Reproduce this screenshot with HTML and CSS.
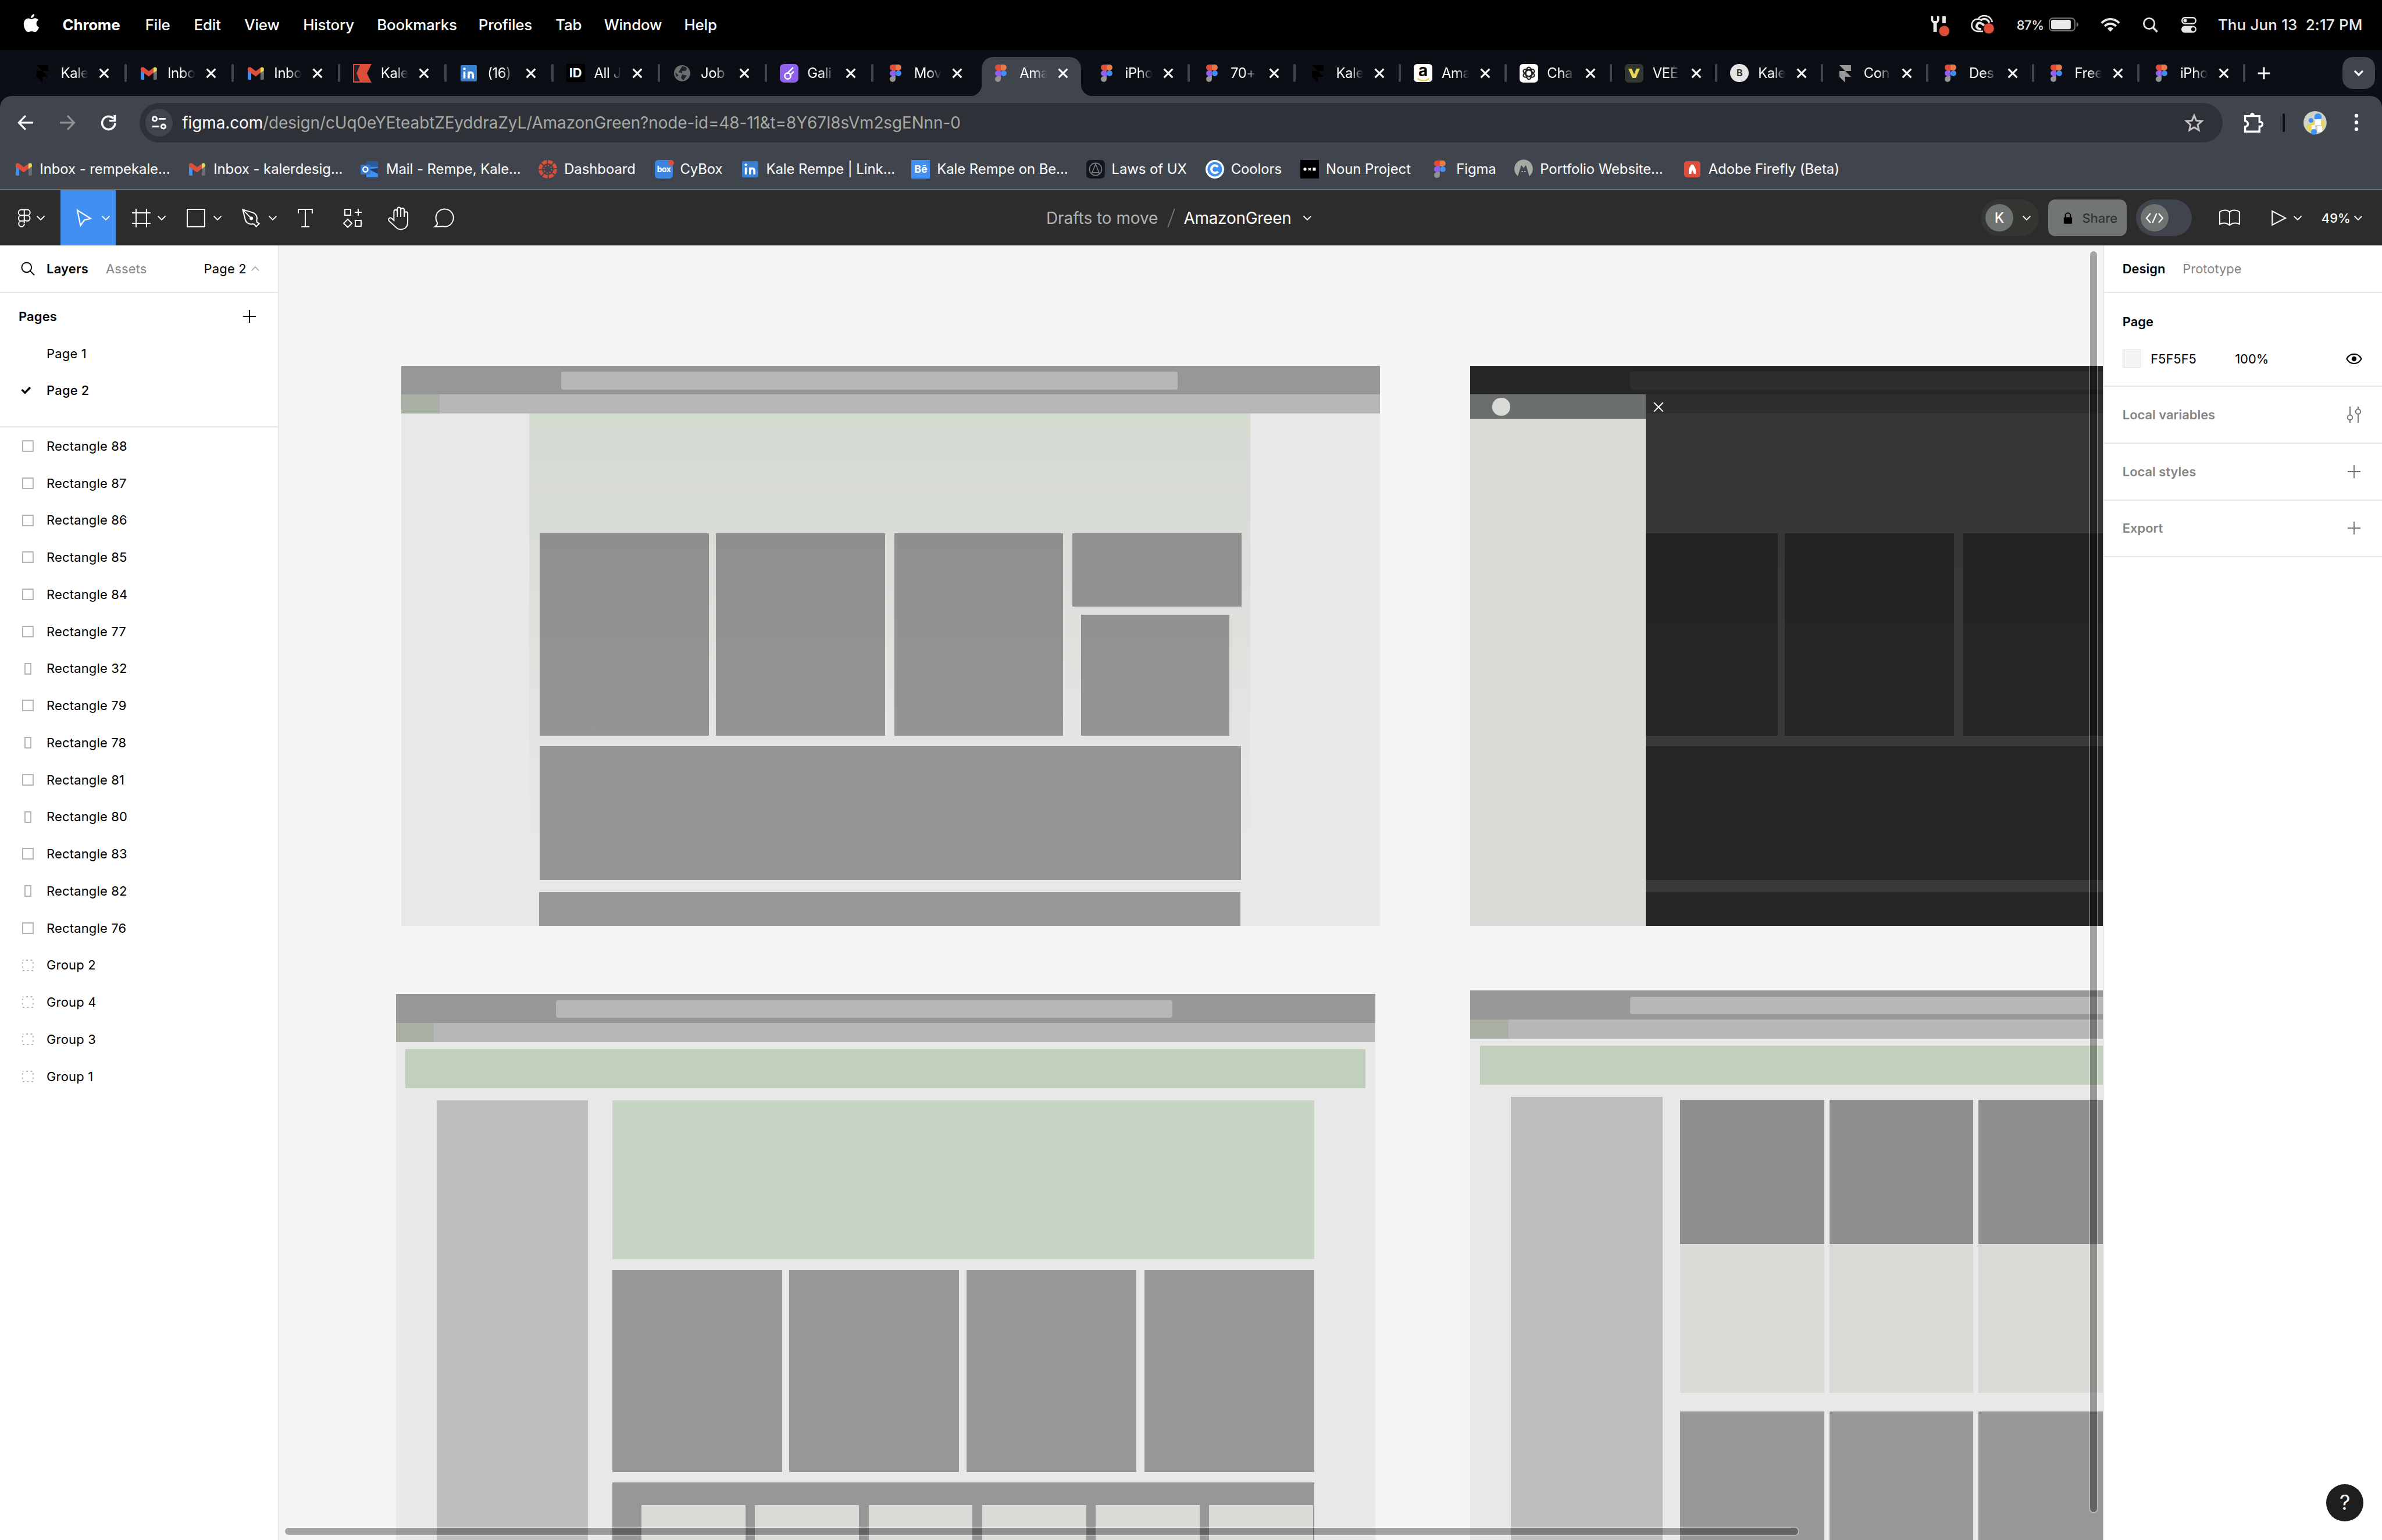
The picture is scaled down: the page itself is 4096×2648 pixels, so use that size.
FILE: index.html
```html
<!DOCTYPE html>
<html lang="en">
<head>
    <meta charset="UTF-8">
    <title>AmazonGreen – Figma</title>
    <link rel="stylesheet" href="styles.css">
</head>
<body>
    <!-- shared icons -->
    <svg class="defs">
        <symbol id="figma" viewBox="0 0 16 16">
            <path d="M5.5 .5H8v5H5.5a2.5 2.5 0 0 1 0-5z" fill="#e04e39"/>
            <path d="M8 .5h2.500a2.500 2.500 0 0 1 0 5H8z" fill="#e8794a"/>
            <path d="M5.500 5.500H8v5H5.500a2.500 2.500 0 0 1 0-5z" fill="#9061ee"/>
            <circle cx="10.500" cy="8" r="2.500" fill="#418ff0"/>
            <path d="M5.500 10.500H8V13a2.500 2.500 0 1 1-2.500-2.500z" fill="#92958f"/>
        </symbol>
        <symbol id="gmail" viewBox="0 0 16 16">
            <path d="M1 5.500l3 2.200v5.800H2a1 1 0 0 1-1-1z" fill="#418ff0"/>
            <path d="M15 5.500l-3 2.200v5.800h2a1 1 0 0 0 1-1z" fill="#6b6f6d"/>
            <path d="M1 6V4.300C1 2.700 2.700 2.200 3.800 3L8 6.200 12 3.200V7.500L8 10.800z" fill="#dc4e3a"/>
            <path d="M12 3.200c1.300-1 3-.4 3 1.100V5.600L12 7.800z" fill="#e6d75c"/>
        </symbol>
        <symbol id="framer" viewBox="0 0 16 16">
            <path d="M3 1h10v5H8zM3 6h5l5 5H8v5l-5-5z" fill="currentColor"/>
        </symbol>
        <symbol id="linkedin" viewBox="0 0 16 16">
            <rect x="1" y="1" width="14" height="14" rx="1" fill="#3b7fd0"/>
            <path d="M4.300 6.500v6M8 12.500v-6M8 9.300c0-2.700 3.600-2.700 3.600 0v3.200" fill="none" stroke="#fff" stroke-width="1.800"/>
            <circle cx="4.300" cy="4.200" r="1.100" fill="#fff"/>
        </symbol>
        <symbol id="close" viewBox="0 0 10 10">
            <path d="M1.300 1.300l7.400 7.400M8.700 1.300L1.300 8.700" stroke="#fff" stroke-width="1.500" fill="none"/>
        </symbol>
        <symbol id="chev" viewBox="0 0 8 8">
            <path d="M.8 2.300L4 5.500l3.200-3.200" stroke="currentColor" fill="none"/>
        </symbol>
        <symbol id="plus" viewBox="0 0 12 12">
            <path d="M6 .5v11M.5 6h11" stroke="currentColor" fill="none"/>
        </symbol>
        <symbol id="search" viewBox="0 0 12 12">
            <circle cx="4.900" cy="4.900" r="4.200" stroke="currentColor" fill="none"/>
            <path d="M8 8l3.600 3.600" stroke="currentColor" fill="none"/>
        </symbol>
        <symbol id="rect" viewBox="0 0 12 12"><rect x="1.500" y="1.500" width="9" height="9" stroke="#b3b3b3" fill="none"/></symbol>
        <symbol id="tall" viewBox="0 0 12 12"><rect x="3.500" y="1.500" width="5" height="9" stroke="#b3b3b3" fill="none"/></symbol>
        <symbol id="group" viewBox="0 0 12 12"><rect x="1.500" y="1.500" width="9" height="9" stroke="#b3b3b3" stroke-dasharray="1.500 2.250" stroke-dashoffset=".75" fill="none"/></symbol>
    </svg>

    <div class="menubar">
        <svg class="apple" viewBox="0 0 14 17"><path d="M9.600 0c.2 1.800-1.300 3.500-3 3.500C6.400 1.900 8 .2 9.600 0zM7 4.600c.7 0 1.600-.9 3.100-.9 1.200 0 2.300.6 3 1.600-2.600 1.500-2.200 5.200.5 6.200-.6 1.700-2 4.100-3.500 4.100-1.200 0-1.500-.7-2.900-.7s-1.800.7-2.900.7C2.500 15.600.4 12 .4 9c0-3.400 2-5.200 3.900-5.200 1.200 0 2.100.8 2.700.8z" fill="#fff"/></svg>
        <div class="menu">
            <b>Chrome</b><span>File</span><span>Edit</span><span>View</span><span>History</span><span>Bookmarks</span><span>Profiles</span><span>Tab</span><span>Window</span><span>Help</span>
        </div>
        <div class="status">
            <svg viewBox="0 0 17 18"><path d="M1.200 0v2.800a2.600 2.600 0 0 0 5.200 0V0" fill="none" stroke="#e8e8e8" stroke-width="1.900"/><path d="M3.800 4v9.500" stroke="#e8e8e8" stroke-width="3"/><path d="M10 0h3v6h-3z" fill="#e8e8e8"/><circle cx="11.700" cy="12.700" r="4.500" fill="#dc4e3a"/></svg>
            <svg viewBox="0 0 21 17"><path d="M10.500 14H6a5.300 5.300 0 1 1 3.500-9.300M6.500 2.800A7 7 0 0 1 18.500 6" fill="none" stroke="#e8e8e8" stroke-width="1.300"/><path d="M9 12c-3 0-5-1.500-3.500-4s4-1 6 1" fill="none" stroke="#e8e8e8" stroke-width="2"/><path d="M8.500 4.500c3-2.500 6-1 7.500 2" fill="none" stroke="#e8e8e8" stroke-width="1.800"/><circle cx="15.500" cy="11.500" r="4.500" fill="#dc4e3a"/></svg>
            <span class="pct">87%</span>
            <svg viewBox="0 0 26 13"><rect x=".5" y=".6" width="22" height="11" rx="3" fill="none" stroke="#747775"/><rect x="2" y="2" width="17" height="8.200" rx="1.600" fill="#e8e8e8"/><path d="M24 4v4.200c2-.8 2-3.400 0-4.200z" fill="#747775"/></svg>
            <svg viewBox="0 0 17 13"><path d="M.9 4.800C5.300.3 11.700.3 16.100 4.800M3.600 7.500c2.900-2.800 6.900-2.800 9.800 0" fill="none" stroke="#e8e8e8" stroke-width="1.900"/><path d="M5.900 9.500c1.600-1.400 3.600-1.400 5.200 0L8.500 12.300z" fill="#e8e8e8"/></svg>
            <svg viewBox="0 0 13 13"><circle cx="5.300" cy="5.300" r="4.600" fill="none" stroke="#e8e8e8" stroke-width="1.400"/><path d="M8.600 8.600l3.700 3.800" stroke="#e8e8e8" stroke-width="1.700"/></svg>
            <svg viewBox="0 0 13 14"><rect x=".6" y=".6" width="11.800" height="5.200" rx="2.600" fill="none" stroke="#e8e8e8" stroke-width="1.200"/><circle cx="3.200" cy="3.200" r="1.500" fill="#e8e8e8"/><rect y="7.800" width="13" height="5.900" rx="2.900" fill="#e8e8e8"/><circle cx="10.200" cy="10.700" r="1.700" fill="#000"/></svg>
            <span class="date">Thu Jun 13&nbsp; 2:17 PM</span>
        </div>
    </div>

    <div class="tabs">
        <div class="tab wide"><svg class="black"><use href="#framer"/></svg><span>Kale</span><svg class="x"><use href="#close"/></svg></div>
        <div class="tab wide"><svg><use href="#gmail"/></svg><span>Inbo</span><svg class="x"><use href="#close"/></svg></div>
        <div class="tab wide"><svg><use href="#gmail"/></svg><span>Inbo</span><svg class="x"><use href="#close"/></svg></div>
        <div class="tab wide"><svg viewBox="0 0 16 16"><path d="M0 0h16L12 8l4 8H0z" fill="#dc4e3a"/><path d="M1 1h5L3 8l3 7H1z" fill="#20242c"/></svg><span>Kale</span><svg class="x"><use href="#close"/></svg></div>
        <div class="tab wide"><svg><use href="#linkedin"/></svg><span>(16)</span><svg class="x"><use href="#close"/></svg></div>
        <div class="tab wide"><i class="fav id">ID</i><span>All J</span><svg class="x"><use href="#close"/></svg></div>
        <div class="tab wide"><svg viewBox="0 0 16 16"><circle cx="8" cy="8" r="7" fill="#6b6f6d"/><path d="M8 2c4 0 5 2 3 4H8v2L5 7zM8 9l4 1-3 4-2-2zM2 7l3 3-2 1z" fill="#20242c"/></svg><span>Job</span><svg class="x"><use href="#close"/></svg></div>
        <div class="tab wide"><svg viewBox="0 0 16 16"><rect width="16" height="16" rx="3.500" fill="#9061ee"/><path d="M11.500 3L6 8.500M12 6.500L8.500 10" stroke="#fff" stroke-width="1.200"/><circle cx="6.800" cy="10.300" r="2.600" fill="none" stroke="#fff" stroke-width="1.200"/></svg><span>Gali</span><svg class="x"><use href="#close"/></svg></div>
        <div class="tab last"><svg><use href="#figma"/></svg><span>Mov</span><svg class="x"><use href="#close"/></svg></div>
        <div class="tab active"><svg><use href="#figma"/></svg><span>Ama</span><svg class="x"><use href="#close"/></svg></div>
        <div class="tab"><svg><use href="#figma"/></svg><span>iPho</span><svg class="x"><use href="#close"/></svg></div>
        <div class="tab"><svg><use href="#figma"/></svg><span>70+</span><svg class="x"><use href="#close"/></svg></div>
        <div class="tab"><svg class="black"><use href="#framer"/></svg><span>Kale</span><svg class="x"><use href="#close"/></svg></div>
        <div class="tab"><i class="fav amazon">a<svg viewBox="0 0 12 4"><path d="M.5 .8c3 3 8 3 10.500 0" fill="none" stroke="#e6c84a" stroke-width="1.300"/></svg></i><span>Ama</span><svg class="x"><use href="#close"/></svg></div>
        <div class="tab"><svg viewBox="0 0 16 16"><rect width="16" height="16" rx="3" fill="#fff"/><g fill="none" stroke="#222"><ellipse cx="8" cy="8" rx="2.600" ry="5.300"/><ellipse cx="8" cy="8" rx="2.600" ry="5.300" transform="rotate(60 8 8)"/><ellipse cx="8" cy="8" rx="2.600" ry="5.300" transform="rotate(120 8 8)"/></g></svg><span>Cha</span><svg class="x"><use href="#close"/></svg></div>
        <div class="tab"><svg viewBox="0 0 16 16"><rect width="16" height="16" rx="3" fill="#343632"/><path d="M3 4h3l2 5 2-5h3L9.500 12h-3z" fill="#e6d75c"/></svg><span>VEE</span><svg class="x"><use href="#close"/></svg></div>
        <div class="tab"><i class="fav b">B</i><span>Kale</span><svg class="x"><use href="#close"/></svg></div>
        <div class="tab"><svg class="gray"><use href="#framer"/></svg><span>Con</span><svg class="x"><use href="#close"/></svg></div>
        <div class="tab"><svg><use href="#figma"/></svg><span>Des</span><svg class="x"><use href="#close"/></svg></div>
        <div class="tab"><svg><use href="#figma"/></svg><span>Free</span><svg class="x"><use href="#close"/></svg></div>
        <div class="tab"><svg><use href="#figma"/></svg><span>iPho</span><svg class="x"><use href="#close"/></svg></div>
        <svg class="new-tab" viewBox="0 0 12 12"><path d="M6 .8v10.400M.8 6h10.400" stroke="#fff" stroke-width="1.500"/></svg>
        <div class="tab-search"><svg viewBox="0 0 10 10"><path d="M1.500 3L5 6.500 8.500 3" fill="none" stroke="#fff" stroke-width="1.600"/></svg></div>
    </div>

    <div class="browser">
        <div class="nav">
            <svg viewBox="0 0 14 14"><path d="M13.500 7H1.500M7 1L1.200 7 7 13" fill="none" stroke="#fff" stroke-width="1.600"/></svg>
            <svg viewBox="0 0 14 14"><path d="M.5 7h12M7 1l5.800 6L7 13" fill="none" stroke="#92928f" stroke-width="1.600"/></svg>
            <svg viewBox="0 0 14 14"><path d="M12.500 7.500A5.600 5.600 0 1 1 10.900 3.300" fill="none" stroke="#fff" stroke-width="1.800"/><path d="M13.200 .5v5.600H7.500V4.500h3.700V.5z" fill="#fff"/></svg>
            <div class="address">
                <div class="tune"><svg viewBox="0 0 14 12"><g fill="none" stroke="#fff" stroke-width="1.500"><circle cx="3" cy="2.700" r="1.800"/><path d="M6.500 2.700h6M1 9.300h6"/><circle cx="10.500" cy="9.300" r="1.800"/></g></svg></div>
                <div class="url"><b>figma.com</b>/design/cUq0eYEteabtZEyddraZyL/AmazonGreen?node-id=48-11&amp;t=8Y67I8sVm2sgENnn-0</div>
                <svg class="star" viewBox="0 0 17 16"><path d="M8.500 1.800l1.900 4.400 4.800.4-3.600 3.200 1 4.700-4.100-2.500-4.100 2.500 1-4.700L1.800 6.600l4.800-.4z" fill="none" stroke="#c4c4c4" stroke-width="1.500"/></svg>
            </div>
            <svg viewBox="0 0 18 18"><path d="M1.300 3.300h12.400v5c3.500-.5 3.500 4.400 0 4v4.400H1.300v-4.200c3.200-.4 3.200-4.500 0-5z" fill="none" stroke="#fff" stroke-width="1.700"/><path d="M5.500 3a2 2.600 0 0 1 4 0z" fill="#fff"/></svg>
            <i class="bar"></i>
            <svg viewBox="0 0 20 20"><circle cx="10" cy="10" r="10" fill="#cfd3c9"/><path d="M2 13a8 8 0 0 0 4 5l3-2V8zM15 6l4 4-2 5-2 1z" fill="#e6d75c"/><circle cx="12.500" cy="5.200" r="3.200" fill="#418ff0"/><circle cx="6.500" cy="8" r="2" fill="#418ff0"/><path d="M10 7h5v5H10zM7 12h3v5H7zM12 13h4v5h-4z" fill="#fff"/><circle cx="9" cy="18" r="2.500" fill="#418ff0"/></svg>
            <svg viewBox="0 0 4 16"><g fill="#fff"><circle cx="2" cy="2" r="1.600"/><circle cx="2" cy="7.800" r="1.600"/><circle cx="2" cy="13.600" r="1.600"/></g></svg>
        </div>
        <div class="bookmarks">
            <div><svg><use href="#gmail"/></svg>Inbox - rempekale...</div>
            <div><svg><use href="#gmail"/></svg>Inbox - kalerdesig...</div>
            <div><svg viewBox="0 0 16 16"><path d="M5 1h10v14H5z" fill="#418ff0"/><path d="M5 1h10v5H5z" fill="#2a5c9c"/><path d="M7 8l8 4V7z" fill="#1d3f70"/><rect x="0" y="4" width="8.500" height="8.500" rx="1" fill="#3577cc"/><circle cx="4.200" cy="8.200" r="2.100" fill="none" stroke="#fff" stroke-width="1.200"/></svg>Mail - Rempe, Kale...</div>
            <div><svg viewBox="0 0 16 16"><circle cx="8" cy="8" r="6.500" fill="none" stroke="#dc4e3a" stroke-width="3" stroke-dasharray="4.100 1"/><circle cx="8" cy="8" r="3.300" fill="none" stroke="#dc4e3a" stroke-width="1.100" stroke-dasharray="1.100 1.490"/></svg>Dashboard</div>
            <div><i class="fav box">box<em></em></i>CyBox</div>
            <div><svg><use href="#linkedin"/></svg>Kale Rempe | Link...</div>
            <div><i class="fav be">Bē</i>Kale Rempe on Be...</div>
            <div><svg viewBox="0 0 16 16"><rect width="16" height="16" rx="3.500" fill="#12161e"/><circle cx="8" cy="8" r="5.300" fill="none" stroke="#7a7d7a" stroke-width=".8"/><path d="M8 3.500l3 7.500H5z" fill="none" stroke="#7a7d7a" stroke-width=".8"/></svg>Laws of UX</div>
            <div><svg viewBox="0 0 16 16"><circle cx="8" cy="8" r="8" fill="#fff"/><circle cx="8" cy="8" r="6.300" fill="#418ff0"/><path d="M10.700 6a3.200 3.200 0 1 0 0 4" fill="none" stroke="#fff" stroke-width="2"/></svg>Coolors</div>
            <div><svg viewBox="0 0 16 16"><rect width="16" height="16"/><circle cx="4" cy="8" r="1.300" fill="#fff"/><path d="M7 7l2 2M9 7L7 9" stroke="#fff" stroke-width=".8"/><path d="M10.700 6.700h2.600v2.600h-2.600z" fill="#fff"/></svg>Noun Project</div>
            <div><svg><use href="#figma"/></svg>Figma</div>
            <div><svg viewBox="0 0 16 16"><path d="M3 14A8 8 0 1 1 13 14L10 4.500 8 7 6 4.500z" fill="#a5aaa2"/><path d="M6.800 9.500v1M9.200 9.500v1" stroke="#c9cdc6"/></svg>Portfolio Website...</div>
            <div><svg viewBox="0 0 16 16"><rect x="1" y="1" width="14" height="14" rx="2.500" fill="#dc4e3a"/><path d="M5 12V8l2-4h2l2 4v4H9.500L8 8.500 7 12z" fill="#fff"/></svg>Adobe Firefly (Beta)</div>
        </div>
    </div>

    <div class="toolbar">
        <div class="tools">
            <svg viewBox="0 0 12 16"><path d="M5.900.7h-2.500a2.500 2.500 0 0 0 0 5h5a2.500 2.500 0 0 0 0-5zv12M5.900 5.700H3.400a2.400 2.400 0 0 0 0 4.900h2.500M3.400 10.600a2.400 2.400 0 1 0 2.500 2.400M8.400 5.700a2.450 2.450 0 1 1-2.500 2.400" fill="none" stroke="#fff"/></svg>
            <svg class="chev"><use href="#chev"/></svg>
            <div class="move">
                <svg viewBox="0 0 14 16"><path d="M1 1.200l11.500 7.200-5.500 1.400-3.300 4.700z" fill="none" stroke="#fff" stroke-width="1.100"/></svg>
                <svg class="chev"><use href="#chev"/></svg>
            </div>
            <svg viewBox="0 0 16 16"><path d="M3.500 0v16M12.500 0v16M0 3.500h16M0 12.500h16" stroke="#fff"/></svg>
            <svg class="chev"><use href="#chev"/></svg>
            <svg viewBox="0 0 16 16"><rect x=".5" y=".5" width="15" height="15" fill="none" stroke="#fff"/></svg>
            <svg class="chev"><use href="#chev"/></svg>
            <svg viewBox="0 0 16 16"><path d="M.7.7l8.500 2.500c3 1 4.500 4 3.500 6.800l.2 1.500 2 1.300-2.600 2.600-1.600-2-1.500-.3C6 13.800 3.500 12 2.800 9zl7.300 7.500" fill="none" stroke="#fff"/><circle cx="8.100" cy="8.300" r="1.500" fill="#fff"/></svg>
            <svg class="chev"><use href="#chev"/></svg>
            <svg viewBox="0 0 13 16"><path d="M.5 4V.5h12V4M6.500.5v15M3 15.500h7" fill="none" stroke="#fff"/></svg>
            <svg viewBox="0 0 16 16"><path d="M1 .5h5v5H1zM10 10h5v5h-5zM12.500 0v6M9.500 3h6M3.500 9L7 12.500 3.500 16 0 12.500z" fill="none" stroke="#fff"/></svg>
            <svg viewBox="0 0 18 20"><path d="M5.200 12V4.700c0-2.400 2.900-2.400 2.900 0V9 2.700c0-2.600 3-2.600 3 0V9 3.200c0-2.200 3-2.200 3 0V9 6c0-1.800 3-1.800 3 0v7.500c0 7-7.500 7.500-10.100 4.500L1 12.500C-.5 10.500 2 9 3.500 10.400z" fill="none" stroke="#fff"/></svg>
            <svg viewBox="0 0 18 16"><path d="M3.200 12.300A7.600 7.600 0 1 1 10 15.400c-3-.6-5 0-9 .1 1.500-1 2-2 2.200-3.200z" fill="none" stroke="#fff"/></svg>
        </div>
        <div class="file"><span>Drafts to move</span><em></em><b>AmazonGreen</b><svg class="chev"><use href="#chev"/></svg></div>
        <div class="actions">
            <div class="user"><i>K</i><svg class="chev"><use href="#chev"/></svg></div>
            <div class="share"><svg viewBox="0 0 8 10"><path d="M1.800 5V2.800a2.200 2.200 0 0 1 4.400 0V5" fill="none" stroke="#000"/><rect x=".4" y="4.300" width="7.200" height="5.600" rx=".8"/></svg>Share</div>
            <div class="dev"><i><svg viewBox="0 0 16 10"><path d="M4.500 1L1 5l3.500 4M11.500 1L15 5l-3.500 4M9.800 1L6.200 9" fill="none" stroke="#fff" stroke-width="1.100"/></svg></i></div>
            <svg viewBox="0 0 18 14"><path d="M9 12.500V2C7.500-.2 3-.3.500 1.600v10.600c2.500-1.300 5.500-1 7 0L9 13.200l1.500-1c1.500-1 4.500-1.300 7 0V1.600C15-.3 10.500-.2 9 2" fill="none" stroke="#fff"/></svg>
            <svg viewBox="0 0 13 14"><path d="M.6 1l11.500 6L.6 13z" fill="none" stroke="#fff"/></svg>
            <svg class="chev"><use href="#chev"/></svg>
            <span>49%</span>
            <svg class="chev"><use href="#chev"/></svg>
        </div>
    </div>

    <div class="editor">
        <div class="left">
            <div class="left-head"><svg><use href="#search"/></svg><b>Layers</b><span class="muted">Assets</span><span>Page 2</span><svg class="up"><use href="#chev"/></svg></div>
            <div class="pages">
                <div class="pages-title"><b>Pages</b><svg><use href="#plus"/></svg></div>
                <div class="row">Page 1</div>
                <div class="row current"><svg viewBox="0 0 9 8"><path d="M.8 3.500l2.700 2.700L8 1.500" fill="none" stroke="#000" stroke-width="1.700"/></svg>Page 2</div>
            </div>
            <div class="row"><svg><use href="#rect"/></svg>Rectangle 88</div>
            <div class="row"><svg><use href="#rect"/></svg>Rectangle 87</div>
            <div class="row"><svg><use href="#rect"/></svg>Rectangle 86</div>
            <div class="row"><svg><use href="#rect"/></svg>Rectangle 85</div>
            <div class="row"><svg><use href="#rect"/></svg>Rectangle 84</div>
            <div class="row"><svg><use href="#rect"/></svg>Rectangle 77</div>
            <div class="row"><svg><use href="#tall"/></svg>Rectangle 32</div>
            <div class="row"><svg><use href="#rect"/></svg>Rectangle 79</div>
            <div class="row"><svg><use href="#tall"/></svg>Rectangle 78</div>
            <div class="row"><svg><use href="#rect"/></svg>Rectangle 81</div>
            <div class="row"><svg><use href="#tall"/></svg>Rectangle 80</div>
            <div class="row"><svg><use href="#rect"/></svg>Rectangle 83</div>
            <div class="row"><svg><use href="#tall"/></svg>Rectangle 82</div>
            <div class="row"><svg><use href="#rect"/></svg>Rectangle 76</div>
            <div class="row"><svg><use href="#group"/></svg>Group 2</div>
            <div class="row"><svg><use href="#group"/></svg>Group 4</div>
            <div class="row"><svg><use href="#group"/></svg>Group 3</div>
            <div class="row"><svg><use href="#group"/></svg>Group 1</div>
        </div>

        <div class="canvas">
            <div class="frame home">
                <div class="f-top"><i></i></div>
                <div class="f-nav"><i></i></div>
                <div class="f-hero">
                    <div class="f-cards"><i></i><i></i><i></i><div><i></i><i></i></div></div>
                    <div class="f-wide"></div>
                    <div class="f-wide cut"></div>
                </div>
            </div>

            <!-- same home page with the side menu open -->
            <div class="frame home menu-open">
                <div class="f-top"><i></i></div>
                <div class="f-nav"><i></i></div>
                <div class="f-hero">
                    <div class="f-cards"><i></i><i></i><i></i><div><i></i><i></i></div></div>
                    <div class="f-wide"></div>
                    <div class="f-wide cut"></div>
                </div>
                <div class="dim"></div>
                <div class="drawer"><div><i></i></div></div>
                <svg class="drawer-x" viewBox="0 0 10 10"><path d="M.7.700l8.600 8.600M9.300.700L.7 9.300" stroke="#fff" stroke-width="1.100"/></svg>
            </div>

            <div class="frame category">
                <div class="f-top"><i></i></div>
                <div class="f-nav"><i></i></div>
                <div class="banner"></div>
                <div class="f-body">
                    <div class="f-side"></div>
                    <div class="f-main">
                        <div class="green"></div>
                        <div class="f-cards"><i></i><i></i><i></i><i></i></div>
                        <div class="f-panel"><i></i><i></i><i></i><i></i><i></i><i></i></div>
                    </div>
                </div>
            </div>

            <div class="frame results">
                <div class="f-top"><i></i></div>
                <div class="f-nav"><i></i></div>
                <div class="banner"></div>
                <div class="f-body">
                    <div class="f-side"></div>
                    <div class="f-grid">
                        <i></i><i></i><i></i>
                        <i class="text"></i><i class="text"></i><i class="text"></i>
                        <i class="next"></i><i class="next"></i><i class="next"></i>
                    </div>
                </div>
            </div>

            <div class="scroll-y"></div>
            <div class="scroll-x"></div>
        </div>

        <div class="right">
            <div class="right-head"><b>Design</b><span class="muted">Prototype</span></div>
            <div class="page-props">
                <b>Page</b>
                <div class="fill"><i></i><span>F5F5F5</span><span>100%</span><svg viewBox="0 0 14 10"><path d="M.7 5C3.500-.4 10.500-.4 13.300 5 10.500 10.400 3.500 10.400.7 5z" fill="none" stroke="#000" stroke-width="1.100"/><circle cx="7" cy="5" r="2.100"/></svg></div>
            </div>
            <div class="section"><b>Local variables</b><svg viewBox="0 0 14 14"><path d="M3.500 0v7M3.500 12v2M10.500 0v2M10.500 7v7" stroke="#777"/><g fill="none" stroke="#777"><circle cx="3.500" cy="9.400" r="2.100"/><circle cx="10.500" cy="4.400" r="2.100"/></g></svg></div>
            <div class="section"><b>Local styles</b><svg><use href="#plus"/></svg></div>
            <div class="section"><b>Export</b><svg><use href="#plus"/></svg></div>
            <div class="help">?</div>
        </div>
    </div>
</body>
</html>
```

FILE: styles.css
```css
* {
    box-sizing: border-box;
}
html {
    background: #fff;
    overflow: hidden;
}
body {
    margin: 0;
    width: 2056px;
    height: 1329.2px;
    zoom: 1.99222;
    overflow: hidden;
    display: flex;
    flex-direction: column;
    background: #0c0e16;
    font-family: Inter, "Liberation Sans", sans-serif;
    font-size: 11px;
    color: #000;
}
i, em {
    font-style: normal;
}
svg {
    display: block;
    overflow: visible;
}
.defs {
    position: absolute;
    width: 0;
    height: 0;
}
.chev {
    width: 8px;
    height: 8px;
}

/* mac menu bar */
.menubar {
    height: 43px;
    flex: none;
    background: #000;
    color: #fff;
    display: flex;
    align-items: center;
    font-size: 13px;
    white-space: nowrap;
}
.apple {
    width: 14px;
    height: 17px;
    margin: -2px 0 0 20px;
}
.menu {
    display: grid;
    grid-template-columns: 71.400px 42px 43.600px 50.600px 63.800px 87.600px 66.500px 41.900px 69.200px 60px;
    margin-left: 20px;
    font-weight: 500;
    letter-spacing: -.1px;
}
.menu b {
    font-weight: 700;
}
.status {
    display: grid;
    grid-template-columns: 35px 39.300px 27.700px 44.500px 37px 33px 31.500px 130px;
    align-items: center;
    margin-left: auto;
    margin-right: 11.700px;
    color: #e8e8e8;
    font-weight: 500;
}
.status svg:nth-child(1) { width: 17px; height: 18px; margin-top: 3px; }
.status svg:nth-child(2) { width: 21px; height: 17px; }
.status svg:nth-child(4) { width: 26px; height: 13px; }
.status svg:nth-child(5) { width: 17px; height: 13px; }
.status svg:nth-child(6) { width: 13px; height: 13px; }
.status svg:nth-child(7) { width: 13px; height: 14px; }
.pct {
    font-size: 11px;
    letter-spacing: -.2px;
}
.date {
    letter-spacing: .1px;
}

/* tab strip */
.tabs {
    height: 40px;
    flex: none;
    background: #0c0e16;
    display: flex;
    align-items: center;
    padding-left: 16.500px;
    color: #fff;
    font-size: 12px;
}
.tab {
    width: 91.080px;
    height: 34px;
    flex: none;
    display: flex;
    align-items: center;
    padding-left: 12px;
    position: relative;
}
.tab.wide {
    width: 92.060px;
}
.tab::after {
    content: "";
    position: absolute;
    right: -1px;
    top: 9px;
    width: 2px;
    height: 16px;
    background: #3f444d;
    border-radius: 1px;
}
.tab.last::after {
    display: none;
}
.tab svg {
    width: 16px;
    height: 16px;
    flex: none;
}
.tab span {
    width: 27px;
    margin-left: 8px;
    overflow: hidden;
    white-space: nowrap;
    letter-spacing: -.2px;
    -webkit-mask-image: linear-gradient(90deg, #000 45%, transparent 88%);
    mask-image: linear-gradient(90deg, #000 45%, transparent 88%);
}
.tab .x {
    width: 10px;
    height: 10px;
    margin-left: 5.500px;
}
.tab.active {
    z-index: 0;
}
.tab.active::before {
    content: "";
    position: absolute;
    left: 3.500px;
    top: 3px;
    width: 85.500px;
    height: 34px;
    background: #3f444d;
    border-radius: 10px 10px 0 0;
    z-index: -1;
}
/* curved feet of the active tab */
.tab.active::after {
    left: -6.500px;
    right: auto;
    top: 27px;
    width: 105.500px;
    height: 10px;
    border-radius: 0;
    z-index: -1;
    background:
        radial-gradient(circle at 0 0, transparent 10px, #3f444d 10.400px) 0 0 / 10px 10px no-repeat,
        radial-gradient(circle at 100% 0, transparent 10px, #3f444d 10.400px) 100% 0 / 10px 10px no-repeat;
}
.black { color: #000; }
.gray { color: #989898; }
.fav {
    width: 16px;
    height: 16px;
    flex: none;
    display: flex;
    align-items: center;
    justify-content: center;
    font-weight: 700;
    position: relative;
}
.fav.id {
    background: #000;
    font-size: 11px;
}
.fav.b {
    background: #e4e4e4;
    color: #333;
    border-radius: 50%;
    font-size: 8px;
}
.fav.amazon {
    background: #fff;
    color: #000;
    border-radius: 3px;
    font-size: 14px;
    line-height: 10px;
    padding-bottom: 4px;
}
.fav.amazon svg {
    position: absolute;
    left: 3px;
    bottom: 0;
    width: 11px;
    height: 4px;
}
.fav.box {
    width: 15px;
    background: #3d86e0;
    border-radius: 3px;
    font-size: 7px;
    letter-spacing: -.3px;
}
.fav.box em {
    position: absolute;
    right: -1px;
    top: 0;
    width: 5px;
    height: 5px;
    border-radius: 50%;
    background: #dc4e3a;
}
.fav.be {
    background: #418ff0;
    font-size: 9px;
}
.new-tab {
    width: 12px;
    height: 12px;
    margin-left: 11px;
}
.tab-search {
    width: 28px;
    height: 28px;
    margin-left: auto;
    margin-right: 6px;
    border-radius: 9px;
    background: #3f444d;
    display: flex;
    align-items: center;
    justify-content: center;
}
.tab-search svg {
    width: 10px;
    height: 10px;
}

/* address bar and bookmarks */
.browser {
    height: 81px;
    flex: none;
    background: #3f444d;
    border-radius: 10px 10px 0 0;
    border-bottom: 1.100px solid #6b6f6d;
    color: #fff;
}
.nav {
    display: flex;
    align-items: center;
    height: 46px;
    padding-left: 15px;
}
.nav > svg {
    width: 14px;
    height: 14px;
    flex: none;
    margin-right: 22px;
}
.nav > svg:nth-child(3) {
    margin-right: 19.300px;
}
.address {
    width: 1798px;
    height: 34px;
    flex: none;
    border-radius: 17px;
    background: #2f3138;
    display: flex;
    align-items: center;
    padding: 0 16px 0 5px;
    margin-right: 18px;
}
.tune {
    width: 24px;
    height: 24px;
    border-radius: 50%;
    background: #3f444d;
    display: flex;
    align-items: center;
    justify-content: center;
}
.tune svg {
    width: 14px;
    height: 12px;
}
.url {
    margin-left: 8px;
    font-size: 14px;
    letter-spacing: -.035px;
    color: #a5aaa2;
}
.url b {
    color: #fff;
    font-weight: 400;
}
.star {
    width: 17px;
    height: 16px;
    margin-left: auto;
}
.nav > svg:nth-child(5) { width: 18px; height: 18px; margin-right: 16px; }
.nav > svg:nth-child(7) { width: 20px; height: 20px; margin-right: 23.500px; }
.nav > svg:nth-child(8) { width: 4px; height: 16px; margin-right: 0; }
.bar {
    width: 2px;
    height: 16px;
    border-radius: 1px;
    background: #0c0e16;
    margin-right: 16px;
}
.bookmarks {
    display: grid;
    grid-template-columns: 150px 149px 153.700px 100px 74.300px 147.500px 150.700px 103px 82px 112.500px 72.300px 145.300px 150px;
    align-items: center;
    height: 34px;
    padding-left: 12.300px;
    font-size: 12px;
    letter-spacing: -.03px;
    white-space: nowrap;
}
.bookmarks > div {
    display: flex;
    align-items: center;
}
.bookmarks svg, .bookmarks .fav {
    width: 16px;
    height: 16px;
    margin-right: 6px;
}

/* figma toolbar */
.toolbar {
    height: 48px;
    flex: none;
    background: #2c2c2c;
    color: #fff;
    position: relative;
    display: flex;
    align-items: center;
}
.tools {
    display: grid;
    grid-template-columns: 16px 21px 62px 21.600px 25.400px 22.600px 25.200px 22.400px 25.800px 39.500px 38.500px 39.500px 20px;
    align-items: center;
    padding-left: 15px;
    height: 48px;
}
.tools > svg:not(.chev) {
    width: 16px;
    height: 16px;
}
.tools > svg:nth-child(1) { width: 12px; }
.tools > svg:nth-child(10) { width: 13px; }
.tools > svg:nth-child(12) { width: 18px; height: 20px; }
.tools > svg:nth-child(13) { width: 18px; }
.move {
    width: 48px;
    height: 48px;
    background: #418ff0;
    display: flex;
    align-items: center;
    padding-left: 14px;
}
.move svg:first-child {
    width: 14px;
    height: 16px;
    margin-right: 7.200px;
}
.file {
    position: absolute;
    left: 903px;
    top: 0;
    height: 48px;
    display: flex;
    align-items: center;
    font-size: 14px;
}
.file span {
    width: 96.700px;
    color: #b3b3b3;
    white-space: nowrap;
}
.file b {
    width: 92px;
    font-weight: 400;
    letter-spacing: -.1px;
    margin-right: 10.500px;
}
.file em {
    width: 1px;
    height: 17px;
    margin: 0 10.500px;
    background: #777;
    transform: rotate(20deg);
}
.actions {
    display: flex;
    align-items: center;
    margin-left: auto;
    margin-right: 16.800px;
}
.user {
    width: 50px;
    height: 32px;
    border-radius: 16px;
    background: #343632;
    display: flex;
    align-items: center;
    padding-left: 4px;
    margin-right: 8px;
}
.user i, .dev i {
    width: 24px;
    height: 24px;
    border-radius: 50%;
    background: #6e7271;
    display: flex;
    align-items: center;
    justify-content: center;
    font-size: 12px;
    font-weight: 500;
    margin-right: 7.500px;
}
.share {
    width: 68px;
    height: 32px;
    border-radius: 6px;
    background: #717573;
    color: #343434;
    display: flex;
    align-items: center;
    padding-left: 13px;
    font-weight: 500;
    margin-right: 8px;
}
.share svg {
    width: 8px;
    height: 10px;
    margin-right: 8.500px;
}
.dev {
    width: 48px;
    height: 32px;
    border-radius: 16px;
    background: #3f444d;
    padding: 4px;
    margin-right: 23.500px;
}
.dev svg {
    width: 16px;
    height: 10px;
}
.actions > svg:nth-child(4) { width: 18px; height: 14px; margin-right: 27.500px; }
.actions > svg:nth-child(5) { width: 13px; height: 14px; margin-right: 5.500px; }
.actions > span {
    width: 22px;
    margin: 0 5.500px 0 16.500px;
    font-weight: 500;
}

/* editor */
.editor {
    flex: 1;
    min-height: 0;
    display: flex;
}
.left {
    width: 241px;
    flex: none;
    border-right: 1.100px solid #e6e6e6;
    background: #fff;
    letter-spacing: .1px;
}
b {
    font-weight: 600;
}
.muted {
    color: #858585;
}
.left-head {
    height: 41px;
    border-bottom: 1.100px solid #e6e6e6;
    display: grid;
    grid-template-columns: 22.200px 51.100px 84.700px 40.200px 8px;
    align-items: center;
    padding-left: 18px;
}
.left-head svg {
    width: 12px;
    height: 12px;
}
.left-head .up {
    width: 8px;
    height: 8px;
    transform: rotate(180deg);
    color: #b3b3b3;
}
.pages {
    height: 116px;
    border-bottom: 1.100px solid #e6e6e6;
    padding-top: 4px;
}
.pages-title {
    height: 32px;
    display: flex;
    align-items: center;
    justify-content: space-between;
    padding: 0 18.500px 0 16px;
}
.pages-title svg {
    width: 12px;
    height: 12px;
}
.row {
    height: 32px;
    display: flex;
    align-items: center;
    padding-left: 40.200px;
    position: relative;
}
.row svg {
    width: 12px;
    height: 12px;
    margin-left: -22.200px;
    margin-right: 10.200px;
}
.row.current {
    font-weight: 500;
}
.row.current svg {
    width: 9px;
    height: 8px;
    margin-right: 13.200px;
}

/* canvas with the artboards */
.canvas {
    flex: 1;
    position: relative;
    overflow: hidden;
    background: #f5f5f5;
}
.frame {
    position: absolute;
    width: 844.700px;
    background: #e8e8e8;
    overflow: hidden;
}
.frame i {
    display: block;
}
.home { left: 105.300px; top: 103.500px; height: 483.400px; }
.menu-open { left: 1027.900px; }
.category { left: 100.600px; top: 646px; height: 500px; width: 845.400px; }
.results { left: 1028px; top: 643px; height: 500px; }
.f-top {
    height: 24.700px;
    background: #979797;
    padding: 5.400px 0 0 138.200px;
}
.f-top i {
    width: 532px;
    height: 15.200px;
    border-radius: 2px;
    background: #b7b7b7;
}
.f-nav {
    height: 16.800px;
    background: #b7b7b7;
}
.f-nav i {
    width: 33px;
    height: 100%;
    background: #a8b0a5;
}
.f-hero {
    width: 622.400px;
    height: 441.900px;
    margin-left: 110.500px;
    padding: 103.400px 0 0 9px;
    background: linear-gradient(#d4dbd1, #d9dcd7 24%, #e2e5e1 60%, #e8e8e8 90%);
}
.f-cards {
    display: grid;
    grid-template-columns: 152.200px 153.800px 153.700px 146px;
    height: 174.400px;
}
.f-cards > i {
    width: 146px;
    background: linear-gradient(#8f8f8f, #919191 40%, #919490 60%, #919490 90%, #959595);
}
.f-cards div i {
    height: 63px;
    background: #909090;
}
.f-cards div i + i {
    width: 128px;
    height: 104.400px;
    margin: 7px 0 0 7.900px;
    background: linear-gradient(#919191, #919490 30%, #919490 85%, #959595);
}
.f-wide {
    width: 605.600px;
    height: 115.500px;
    margin-top: 9.100px;
    background: #969696;
}
.f-wide.cut {
    height: 29.500px;
    margin: 10.400px 0 0 -.5px;
    background: #979797;
}
.dim {
    position: absolute;
    inset: 0;
    background: rgba(0,0,0,0.75);
}
.drawer {
    position: absolute;
    left: 0;
    top: 24.700px;
    bottom: 0;
    width: 151.700px;
    background: #d9dbd7;
}
.drawer div {
    height: 21px;
    background: #6b706e;
    padding: 3.300px 0 0 19.300px;
}
.drawer i {
    width: 15.200px;
    height: 15.200px;
    border-radius: 50%;
    background: #d9dbd7;
}
.drawer-x {
    position: absolute;
    left: 158px;
    top: 31.500px;
    width: 9px;
    height: 9px;
}
.banner {
    height: 33.500px;
    margin: 6.200px 8.300px 10.600px;
    background: #c1cfbc;
}
.f-body {
    display: flex;
    height: 420px;
    padding-left: 35.200px;
}
.f-side {
    width: 130.900px;
    background: #bdbdbd;
}
.f-main {
    width: 606px;
    margin-left: 20.800px;
}
.green {
    height: 136.900px;
    margin-bottom: 9.400px;
    background: #c9d5c4;
}
.f-main .f-cards {
    grid-template-columns: 152.600px 153.200px 153.800px 146.400px;
}
.f-main .f-cards i {
    width: 146.400px;
    background: #979797;
}
.f-panel {
    display: flex;
    gap: 8.200px;
    height: 130px;
    margin-top: 8.800px;
    padding: 19.700px 0 0 25.200px;
    background: #979797;
}
.f-panel i {
    width: 89.800px;
    flex: none;
    background: #d9dbd7;
}
.f-grid {
    display: grid;
    grid-template-columns: repeat(3, 124.400px);
    grid-template-rows: 124.200px 128.500px 150px;
    column-gap: 4.400px;
    margin: 2.600px 0 0 15px;
}
.f-grid i { background: #8f8f8f; }
.f-grid .text { background: #d9dbd7; }
.f-grid .next { background: #979797; margin-top: 16.200px; }
.scroll-y, .scroll-x {
    position: absolute;
    border-radius: 4px;
    background: rgba(0,0,0,0.33);
    box-shadow: 0 0 0 1px rgba(255,255,255,0.3);
}
.scroll-y { left: 1563px; top: 5px; width: 6px; height: 1088px; }
.scroll-x { left: 5px; top: 1106.500px; width: 1306px; height: 6px; }

/* properties panel */
.right {
    width: 241px;
    flex: none;
    position: relative;
    background: #fff;
    border-left: 1.100px solid #e6e6e6;
}
.right-head {
    height: 41px;
    display: flex;
    align-items: center;
    padding-left: 16px;
    gap: 15px;
    border-bottom: 1.100px solid #e6e6e6;
}
.page-props {
    height: 81px;
    padding: 18px 17px 0 16px;
    border-bottom: 1.100px solid #e6e6e6;
}
.page-props > b {
    display: block;
    line-height: 14px;
}
.fill {
    display: grid;
    grid-template-columns: 24.300px 72.800px 96px 14px;
    align-items: center;
    margin-top: 16.500px;
}
.fill i {
    width: 16px;
    height: 16px;
    border: 1px solid #dcdcdc;
    background: #f5f5f5;
}
.fill svg {
    width: 14px;
    height: 10px;
}
.section {
    height: 49px;
    display: flex;
    align-items: center;
    justify-content: space-between;
    padding: 0 18px 0 16px;
    border-bottom: 1.100px solid #e6e6e6;
    color: #777;
}
.section b {
    color: #858585;
}
.section svg {
    width: 12px;
    height: 12px;
}
.section:nth-child(3) svg {
    width: 14px;
    height: 14px;
    margin-right: -1px;
}
.help {
    position: absolute;
    right: 16px;
    bottom: 16px;
    width: 32px;
    height: 32px;
    border-radius: 50%;
    background: #1e1e1e;
    color: #fff;
    font-size: 18px;
    line-height: 32px;
    text-align: center;
}
```
